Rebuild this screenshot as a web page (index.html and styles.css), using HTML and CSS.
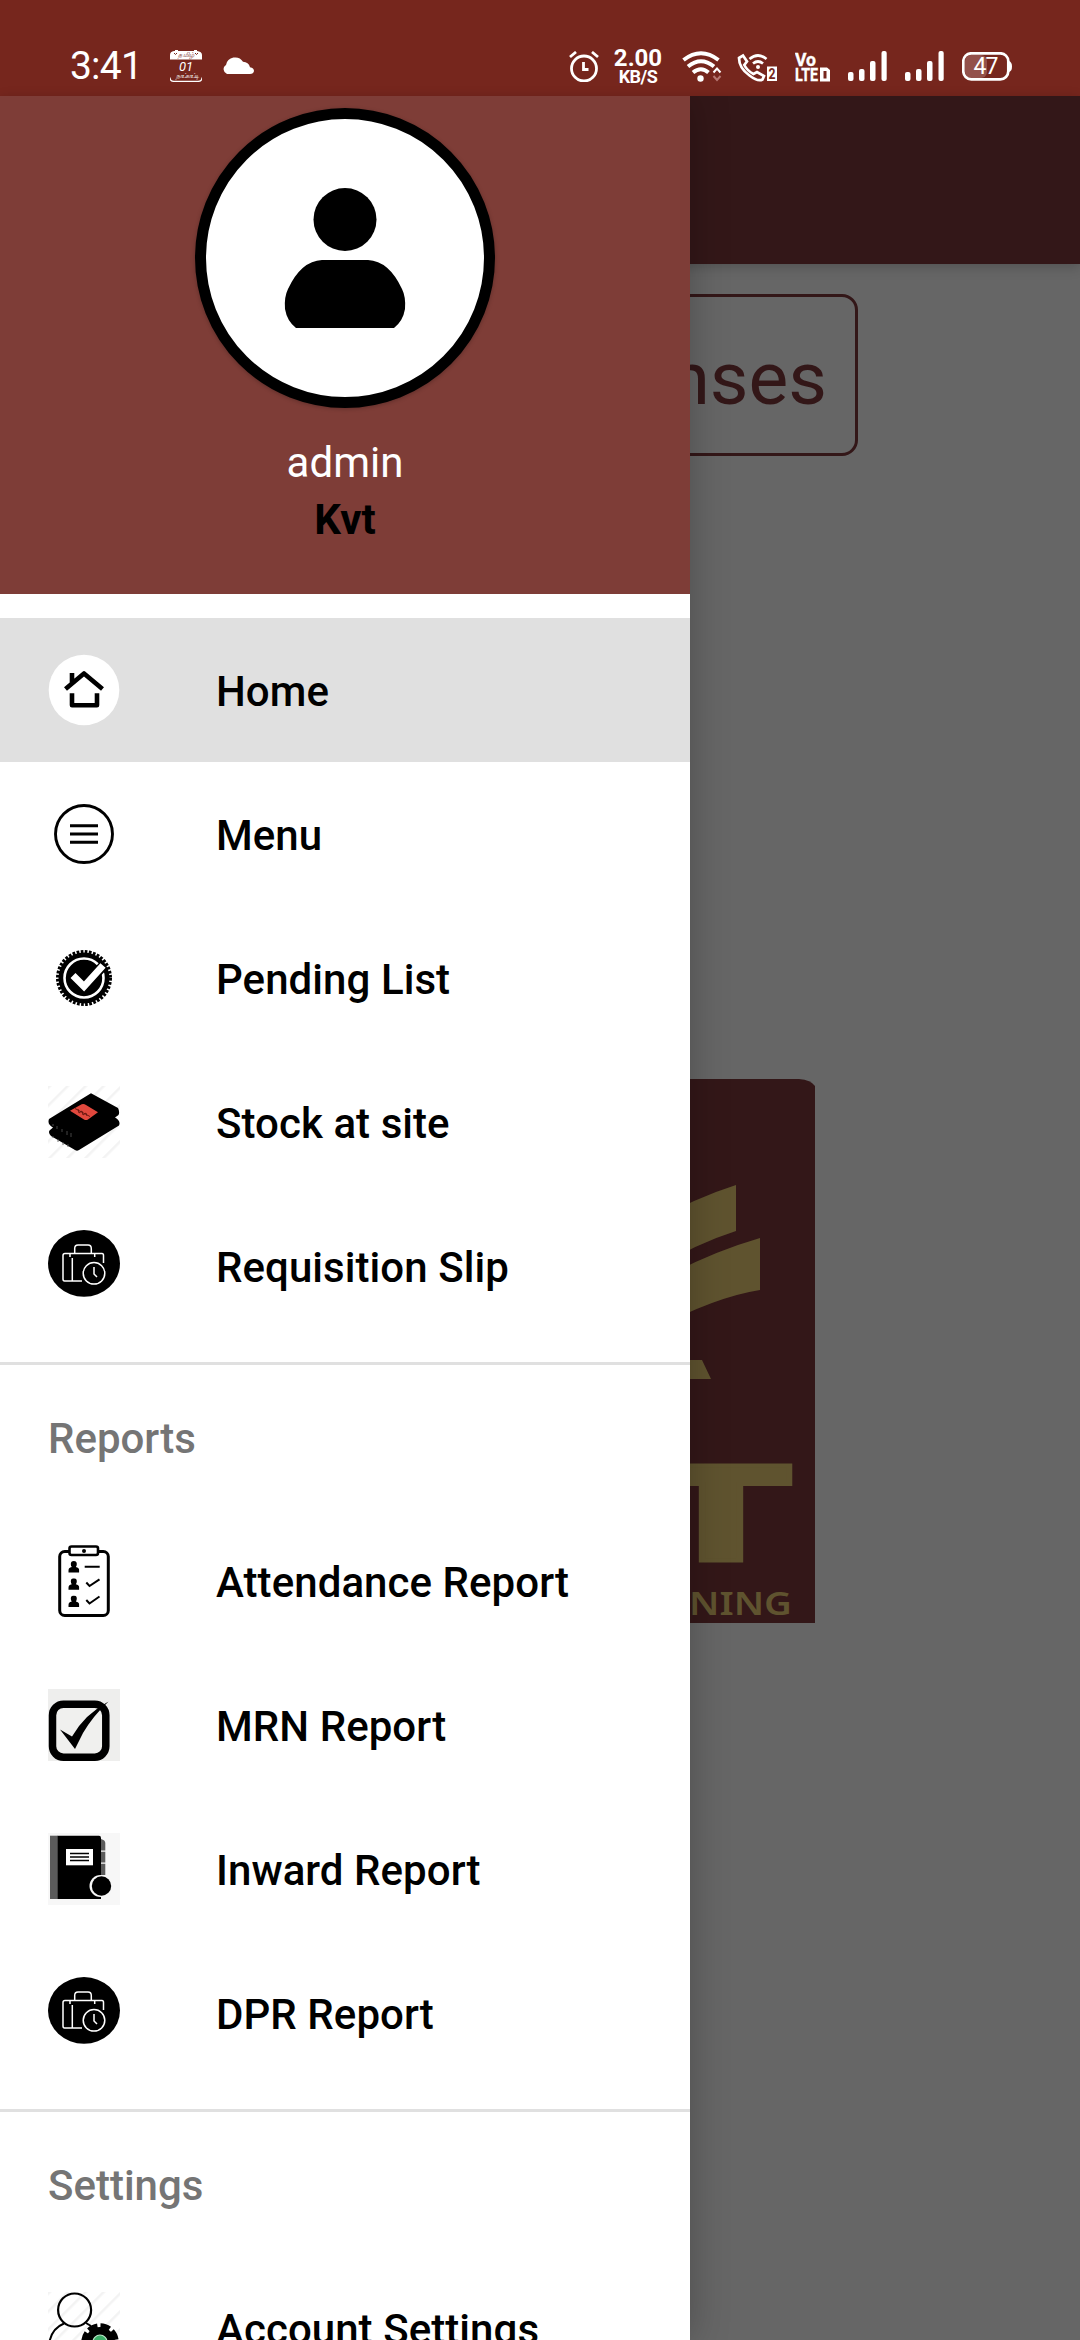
FILE: index.html
```html
<!DOCTYPE html>
<html lang="en">
<head>
<meta charset="utf-8">
<title>KVT</title>
<link rel="stylesheet" href="styles.css">
</head>
<body>
<svg class="defs" width="0" height="0">
  <defs>
    <pattern id="hatch" width="12.7" height="12.7" patternUnits="userSpaceOnUse" patternTransform="rotate(45)">
      <rect width="2.500" height="12.7" fill="#f3f3f3"/>
    </pattern>
    <symbol id="case" viewBox="0 0 72 72">
      <ellipse cx="36" cy="33.4" rx="36" ry="33.3"/>
      <g fill="none" stroke="#fff" stroke-width="1.5">
        <path d="M34 51H16.500Q15 51 15 49V25.500Q15 23.500 17 23.500H54Q55.500 23.500 55.500 25.500V33M24.300 28V51M22 23.500V27M46.700 23.500V27M26.700 23.500V18.500Q26.700 15 30 15H40Q43.300 15 43.300 18.500V23.500"/>
        <circle cx="46" cy="43.300" r="10.800" fill="#000"/>
        <path d="M46 37V44L49 47"/>
      </g>
    </symbol>
    <symbol id="person" viewBox="0 0 11 12">
      <path d="M5.500 0A3 3 0 0 1 8.500 3Q8.500 5 7.500 6Q11 6.500 11 9.500V11.500H0V9.500Q0 6.500 3.500 6Q2.500 5 2.500 3A3 3 0 0 1 5.500 0Z"/>
    </symbol>
    <symbol id="bars" viewBox="0 0 40 30">
      <g fill="#fff"><rect y="21" width="5.500" height="9" rx="2"/><rect x="11" y="18" width="5.500" height="12" rx="2"/><rect x="22" y="10" width="5.500" height="20" rx="2"/><rect x="33.500" width="5.200" height="30" rx="2"/></g>
    </symbol>
  </defs>
</svg>

<div class="screen">
  <header class="status">
    <span class="clock">3:41</span>
    <svg class="cal" viewBox="0 0 32 32">
      <path d="M0 9.500V5Q0 1.500 4 1H5V0H8V1H24V0H27V1Q32 1.500 32 5V9.500Z" fill="#fff"/>
      <path d="M0 27.500Q0 31.400 4 31.400H28Q32 31.400 32 27.500" fill="none" stroke="#fff" stroke-width="1.300"/>
      <path d="M4 3l1.500 1.500L7 3M25 3l1.500 1.500L28 3" fill="none" stroke="#76261d"/>
      <text x="8" y="7.300" font-size="6.500" textLength="16" fill="#76261d">தமிழ்</text>
      <text x="9" y="20.500" font-size="13" textLength="14" fill="#fff">01</text>
      <text x="4.500" y="27.500" font-size="6.500" textLength="23" fill="#fff">நாட்காட்டி</text>
    </svg>
    <svg class="cloud" viewBox="0 0 32 18"><path d="M5 18A5 5 0 0 1 4 9A9.300 9.300 0 0 1 21 5.800Q26.500 6 28 11.200Q32 12 32 15Q31.500 18 28 18Z" fill="#fff"/></svg>

    <svg class="alarm" viewBox="0 0 30 31"><g fill="none" stroke="#fff" stroke-width="2.800"><circle cx="15" cy="17.500" r="12.500"/><path d="M1 6L7 1M29 6L23 1M14.500 11V18.500H19.500"/></g></svg>
    <span class="speed"><b>2.00</b><i>KB/S</i></span>
    <svg class="wifi" viewBox="0 0 40 31"><g fill="none" stroke="#fff" stroke-width="4"><path d="M1.500 9Q19 -4.500 36.500 9M6 15.500Q19 5 32 15.500M11 21.500Q19 15 26.500 21.500"/></g><circle cx="18.500" cy="27.500" r="3.200" fill="#fff"/><path d="M31.500 21.500L35 17.500L38.500 21.500" fill="none" stroke="#fff" stroke-width="2"/><path d="M31.500 25L35 29L38.500 25" fill="none" stroke="#b67772" stroke-width="2"/></svg>
    <svg class="call" viewBox="0 0 40 29"><g fill="none" stroke="#fff" stroke-width="2.700"><path d="M2 5L6 2.500L10 8.500L7.300 12Q10 17.500 16.500 21L20 19L27 23L25.500 26.500Q21 29 12.500 22.500Q2 15 2 5Z"/><path d="M12.500 6Q21 -1 29.500 6M16 10.500Q21 6.500 26 10.500"/></g><circle cx="21" cy="14" r="2" fill="#fff"/><rect x="30" y="13.500" width="10" height="14.500" fill="#fff"/><text x="31.500" y="25.700" font-size="14" font-weight="700" textLength="7" lengthAdjust="spacingAndGlyphs" fill="#76261d">2</text></svg>
    <svg class="volte" viewBox="0 0 36 30"><g fill="#fff" stroke="#fff" stroke-width=".4" font-weight="700"><text x="0" y="14" font-size="19" textLength="21" lengthAdjust="spacingAndGlyphs">Vo</text><text x="0" y="29.300" font-size="19" textLength="23" lengthAdjust="spacingAndGlyphs">LTE</text></g><path d="M25 15.500H32L35 18V29.500H25ZM28.500 19V26.500H31.500V19Z" fill="#fff" fill-rule="evenodd"/></svg>
    <svg class="sig"><use href="#bars"/></svg>
    <svg class="sig second"><use href="#bars"/></svg>
    <svg class="batt" viewBox="0 0 51 29"><rect x="3" y="3" width="22" height="23" rx="6" fill="#93514b"/><rect x="1.300" y="1.300" width="45" height="26" rx="8" fill="none" stroke="#fff" stroke-width="2.700"/><path d="M47 9Q50 10 50 14.500T47 20Z" fill="#fff"/><text x="11.500" y="22" font-size="23" textLength="25" fill="#fff">47</text></svg>
  </header>

  <div class="body">
    <main class="page">
      <div class="appbar"></div>
      <div class="content">
        <div class="button">nses</div>
        <svg class="logo" viewBox="0 0 550 544">
          <path d="M0 14Q0 0 14 0H534Q546 1 550 7V544H0Z" fill="#331718"/>
          <g fill="#5f532f">
            <path d="M390 142Q430 119 471 106V152Q430 165 390 190ZM390 204Q440 175 495 159V211Q450 218 390 250ZM380 281H437L446 300H380Z"/>
            <g transform="translate(456 482) scale(1.55 1)"><text class="brand" text-anchor="middle">T</text></g>
            <text class="tag" x="424" y="536" textLength="103" lengthAdjust="spacingAndGlyphs">NING</text>
          </g>
        </svg>
      </div>
    </main>

    <aside class="drawer">
      <div class="profile">
        <div class="avatar">
          <svg width="122" height="141" viewBox="0 0 122 141"><circle cx="61" cy="31.500" r="31.500"/><path d="M38 72H84Q105 73 118 101Q122 109 121 121Q119 133 110 140H12Q3 133 1 121Q0 109 4 101Q17 73 38 72Z"/></svg>
        </div>
        <div class="user">admin</div>
        <div class="org">Kvt</div>
      </div>
      <nav class="menu">
        <div class="item active">
          <svg class="icon" viewBox="0 0 72 72"><circle cx="36" cy="36" r="35.300" fill="#fff"/><g fill="none" stroke="#000" stroke-width="4.600"><path d="M17.500 35L36 19.500L54.500 35M24 19V29M24 39.300V51.200H49V39.300" stroke-linejoin="round"/></g></svg>
          <span>Home</span>
        </div>
        <div class="item">
          <svg class="icon" viewBox="0 0 72 72"><g fill="none" stroke="#000" stroke-width="2.900"><circle cx="36" cy="36" r="28.500"/><path d="M22 27.700H50M22 36H50M22 44.300H50"/></g></svg>
          <span>Menu</span>
        </div>
        <div class="item">
          <svg class="icon" viewBox="0 0 72 72"><circle cx="36" cy="36" r="25.500"/><circle cx="36" cy="36" r="26.300" fill="none" stroke="#000" stroke-width="3.400" stroke-dasharray="2.700 1.431"/><circle cx="36" cy="36" r="19.500" fill="none" stroke="#fff" stroke-width="2.600"/><path d="M24.500 33.500L36 44.500L55 24" fill="none" stroke="#000" stroke-width="10"/><path d="M25 33.500L36 44.500L55 23.500" fill="none" stroke="#fff" stroke-width="7"/></svg>
          <span>Pending List</span>
        </div>
        <div class="item">
          <svg class="icon" viewBox="0 0 72 72"><rect width="72" height="72" fill="url(#hatch)"/><path d="M43 7.300L70 22Q72 26 70.500 29L67 31.500Q73 35 71 39.500L31 64Q29 65.500 27 64L3 50Q0 47 1.500 44.500L5 41.500Q-1 38 1 33Z"/><path d="M22 24.700L33.700 18.200Q36 17.500 38 19L50 26.300L40 33.500Q38 34.500 36 33.500Z" fill="#e1483d"/><path d="M27 22.500L42 30.500M30 23l1 4 3-2 1 4 3-2 1 3" fill="none" stroke="#64150f" stroke-width=".9"/><path d="M5 38v2M9 40v3M14 43v3M19 45v4M23 47v4M5 50v2M10 53v3M15 56v3M20 58v3" stroke="#555" stroke-width=".8"/></svg>
          <span>Stock at site</span>
        </div>
        <div class="item">
          <svg class="icon"><use href="#case"/></svg>
          <span>Requisition Slip</span>
        </div>
      </nav>
      <nav class="group">
        <h2>Reports</h2>
        <div class="item">
          <svg class="icon" viewBox="0 0 72 72"><rect x="11.700" y="6.500" width="48.600" height="64" rx="5" fill="#fff" stroke="#000" stroke-width="3"/><rect x="21.500" y="1.500" width="28.500" height="8.500" rx="2" fill="#fff" stroke="#000" stroke-width="2.600"/><circle cx="36" cy="6" r="2"/><use href="#person" x="20.300" y="16" width="11" height="12"/><use href="#person" x="20.300" y="33.200" width="11" height="12"/><use href="#person" x="20.300" y="50.500" width="11" height="12"/><path d="M36.700 21.800H51.700M38.300 37.500L41.500 41L51.500 34.300M38.300 55L41.500 58.500L51.500 51.500" fill="none" stroke="#000" stroke-width="2"/></svg>
          <span>Attendance Report</span>
        </div>
        <div class="item">
          <svg class="icon" viewBox="0 0 72 72"><rect width="72" height="72" fill="#eeeeed"/><rect x="4.500" y="15.200" width="53.300" height="53" rx="11" fill="#f0f0ee" stroke="#000" stroke-width="7.500"/><path d="M12 40.500L24 47.500Q37 25 60.500 12.500Q45 27 35 44L27 60Z"/></svg>
          <span>MRN Report</span>
        </div>
        <div class="item">
          <svg class="icon" viewBox="0 0 72 72"><rect width="72" height="72" fill="#f7f7f7"/><rect x="2" y="2.700" width="8" height="63.300" fill="#5b5b5b"/><path d="M9.700 2.700H51Q53 2.700 53 5V66H9.700Z"/><path d="M53 6Q57.300 7 57.300 10V17.500H53ZM53 18.700H57.300V29.500H53ZM53 30.700H57.300V42H53Z" fill="#5b5b5b"/><rect x="18" y="16" width="27" height="16.300" fill="#fff"/><path d="M22 20.500H41M22 24H41M22 27.500H41" stroke="#000" stroke-width="1.500"/><circle cx="52.500" cy="53" r="11" fill="#f7f7f7"/><circle cx="53.500" cy="53" r="9.700"/></svg>
          <span>Inward Report</span>
        </div>
        <div class="item">
          <svg class="icon"><use href="#case"/></svg>
          <span>DPR Report</span>
        </div>
      </nav>
      <nav class="group">
        <h2>Settings</h2>
        <div class="item">
          <svg class="icon" viewBox="0 0 72 72"><rect width="72" height="72" fill="url(#hatch)"/><path d="M.8 60Q0 38 16 31.500M38 31L43 34" fill="none" stroke="#000" stroke-width="2"/><circle cx="26.600" cy="18" r="16.500" fill="none" stroke="#000" stroke-width="2.200"/><circle cx="52" cy="50" r="15"/><circle cx="52" cy="50" r="16" fill="none" stroke="#000" stroke-width="5.500" stroke-dasharray="9.500 3.066"/><circle cx="52" cy="50" r="7" fill="#3cae68" stroke="#b9e6c8" stroke-width="1.200"/></svg>
          <span>Account Settings</span>
        </div>
      </nav>
    </aside>
  </div>
</div>
</body>
</html>
```
FILE: styles.css
```css
* { box-sizing: border-box; }
body { margin: 0; font-family: Roboto, "Noto Sans", sans-serif; }
svg { display: block; flex: none; }
.defs { position: absolute; }

.screen {
  width: 1080px;
  height: 2340px;
  display: flex;
  flex-direction: column;
  overflow: hidden;
  background: #666;
}

/* status bar */
.status {
  height: 96px;
  flex: none;
  display: flex;
  align-items: flex-start;
  padding: 50px 0 0 70px;
  background: #76261d;
  color: #fff;
}
.clock { width: 100px; font-size: 39px; line-height: 33px; letter-spacing: -.8px; white-space: nowrap; }
.cal { width: 32px; height: 32px; font-style: italic; }
.cloud { width: 32px; height: 18px; margin: 6px 0 0 20px; }
.alarm { width: 30px; height: 31px; margin: 1px 0 0 315px; }
.speed { width: 50px; margin: -2px 0 0 14px; display: flex; flex-direction: column; align-items: center; }
.speed b { font-size: 24px; line-height: 20px; }
.speed i { font-size: 18px; line-height: 17px; font-style: normal; font-weight: 700; letter-spacing: -.5px; }
.wifi { width: 40px; height: 31px; margin: 1px 0 0 19px; }
.call { width: 40px; height: 29px; margin: 3px 0 0 15px; }
.volte { width: 36px; height: 30px; margin: 2px 0 0 18px; }
.sig { width: 40px; height: 30px; margin: 1px 0 0 17px; }
.sig.second { margin-left: 17px; }
.batt { width: 51px; height: 29px; margin: 2px 0 0 17px; }

/* drawer and page share one cell; the drawer covers the page's left part */
.body { flex: 1; min-height: 0; display: grid; grid-template: 2244px / 1080px; }
.page, .drawer { grid-area: 1 / 1; }

.appbar { height: 168px; background: #331718; box-shadow: 0 3px 12px rgba(0, 0, 0, .2); }
.content { display: flex; flex-direction: column; align-items: center; padding-top: 30px; }
.button {
  width: 636px;
  height: 162px;
  padding-right: 28px;
  border: 3px solid #331718;
  border-radius: 16px;
  color: #331718;
  font-size: 75px;
  line-height: 162px;
  text-align: right;
}
.logo { width: 550px; height: 544px; margin-top: 623px; }
.brand { font: 700 131px "DejaVu Sans", sans-serif; stroke: #5f532f; stroke-width: 4px; }
.tag { font: 600 33px "Noto Sans", sans-serif; }

.drawer { width: 690px; background: #fff; box-shadow: 0 0 36px rgba(0, 0, 0, .25); clip-path: inset(0 -60px 0 0); }
.profile {
  height: 498px;
  padding-top: 12px;
  display: flex;
  flex-direction: column;
  align-items: center;
  background: #7e3d37;
}
.avatar {
  width: 300px;
  height: 300px;
  padding-top: 69px;
  display: flex;
  justify-content: center;
  align-items: flex-start;
  border: 11px solid #000;
  border-radius: 50%;
  background: #fff;
  box-shadow: 0 1px 4px rgba(0, 0, 0, .25);
}
.user, .org { font-size: 42px; line-height: 57px; }
.user { margin-top: 26px; color: #fff; }
.org { color: #000; font-weight: 700; }

.menu { padding: 24px 0; }
.item { height: 144px; padding-left: 48px; display: flex; align-items: center; gap: 96px; font-size: 42px; font-weight: 500; letter-spacing: .06px; color: #000; }
.item span { padding-top: 2px; }
.item.active { background: #e0e0e0; }
.icon { width: 72px; height: 72px; }
.group { padding-bottom: 24px; border-top: 3px solid #e0e0e0; }
.group h2 { height: 144px; margin: 0; padding-left: 48px; font-size: 42px; font-weight: 500; line-height: 147px; color: #757575; }
```
